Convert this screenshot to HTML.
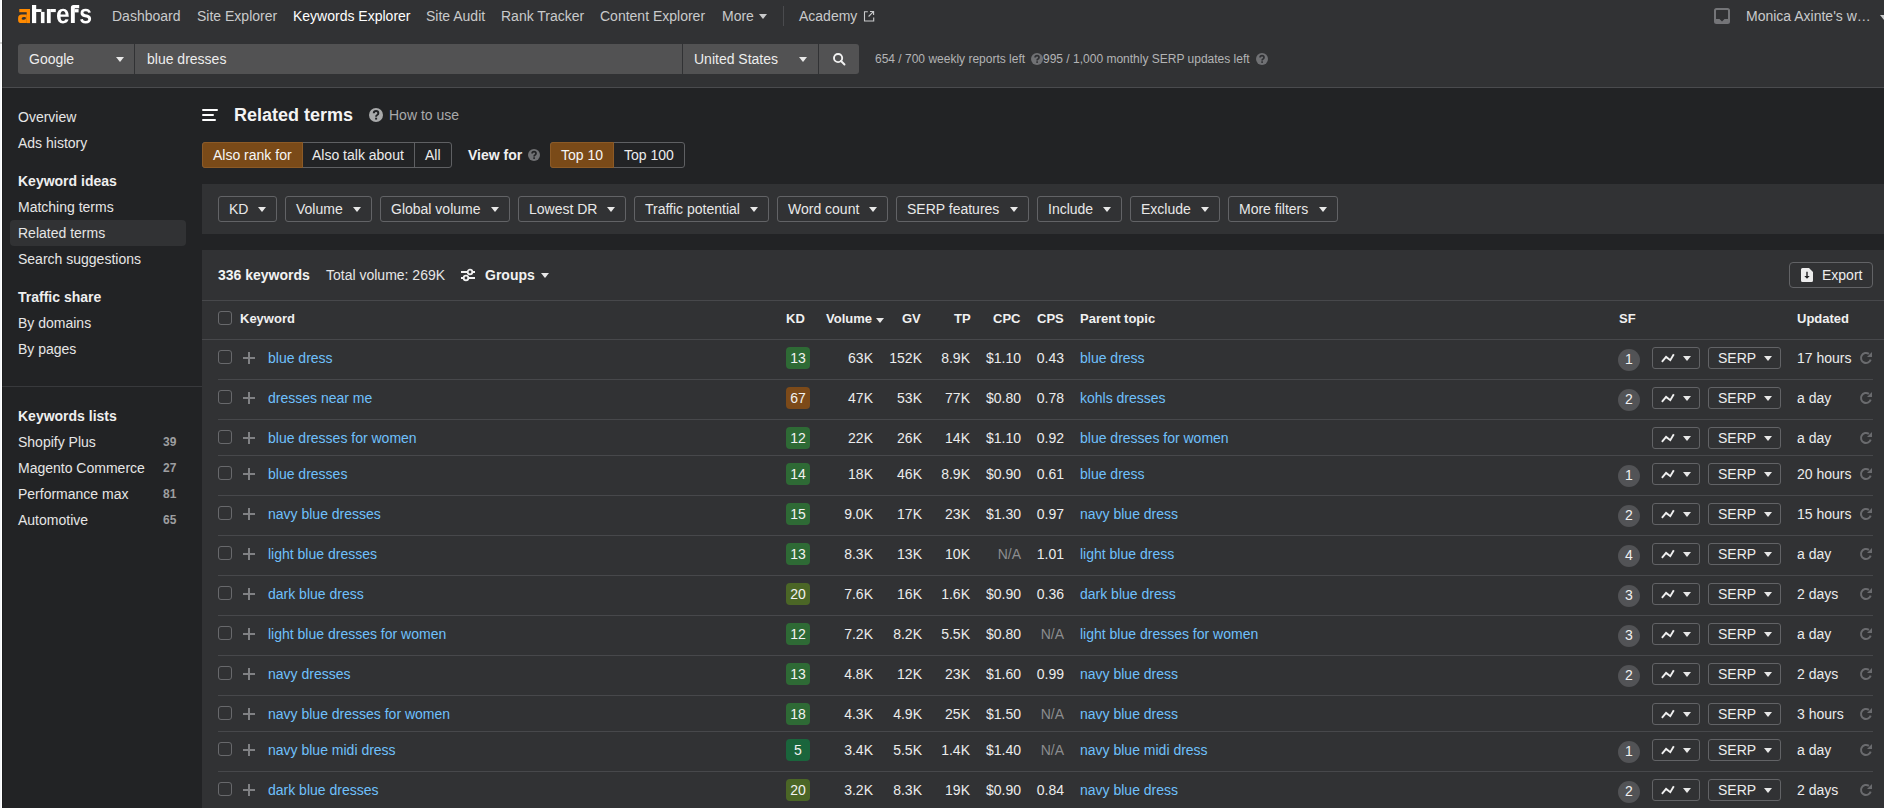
<!DOCTYPE html>
<html><head><meta charset="utf-8">
<style>
*{box-sizing:border-box;margin:0;padding:0}
html,body{width:1884px;height:808px;overflow:hidden}
body{position:relative;background:#222325;font-family:"Liberation Sans",sans-serif;font-size:14px;line-height:16px;color:#e9e9e9}
.a{position:absolute;white-space:nowrap}
.t{position:absolute;white-space:nowrap;line-height:16px}
#strip{left:0;top:0;width:2px;height:808px;background:#efefef}
#top{left:2px;top:0;width:1882px;height:88px;background:#313234;border-bottom:1px solid #4a4b4e}
.nav{color:#c9cacb;top:8px}
.tri{position:absolute;width:0;height:0;border-left:4px solid transparent;border-right:4px solid transparent;border-top:5px solid #e8e8e8}
.sel{position:absolute;top:44px;height:30px;background:#525253}
.side{left:18px;color:#e6e6e6}
.sideb{left:18px;font-weight:bold;color:#efefef}
.cnt{left:163px;color:#9d9ea0;font-size:12px;font-weight:bold}
.panel{position:absolute;background:#313234}
.fb{position:absolute;top:196px;height:26px;border:1px solid #626366;border-radius:3px;color:#e8e8e8}
.fb span{position:absolute;top:4px;left:10px}
.fb i{position:absolute;right:10px;top:10px;width:0;height:0;border-left:4px solid transparent;border-right:4px solid transparent;border-top:5px solid #e8e8e8}
.hd{font-weight:bold;font-size:13px;color:#f0f0f0}
.rl{position:absolute;left:218px;width:1655px;height:1px;background:#47484b}
.cb{position:absolute;left:218px;width:14px;height:14px;border:1px solid #68696c;border-radius:3px}
.pl{position:absolute;left:243px;width:12px;height:12px}
.pl:before{content:"";position:absolute;left:5px;top:0;width:2px;height:12px;background:#808184}
.pl:after{content:"";position:absolute;left:0;top:5px;width:12px;height:2px;background:#808184}
.lk{color:#6fc0fc}
.kd{position:absolute;left:786px;width:24px;height:22px;border-radius:4px;color:#f2f2f2;text-align:center;line-height:22px}
.g1{background:#2e6a35}
.g2{background:#4b6626}
.g0{background:#1a653c}
.o1{background:#7c4a19}
.num{color:#ececec;text-align:right}
.na{color:#8b8c8e}
.sf{position:absolute;left:1618px;width:22px;height:22px;border-radius:50%;background:#525356;color:#f0f0f0;text-align:center;line-height:20px}
.tb{position:absolute;left:1652px;width:48px;height:22px;border:1px solid #626366;border-radius:3px}
.sb{position:absolute;left:1708px;width:73px;height:22px;border:1px solid #626366;border-radius:3px}
.sb span{position:absolute;left:9px;top:2px;color:#ececec}
.tb i,.sb i{position:absolute;top:8px;width:0;height:0;border-left:4px solid transparent;border-right:4px solid transparent;border-top:5px solid #e8e8e8}
.tb i{left:30px}
.sb i{left:55px}
.tb svg{position:absolute;left:8px;top:5px}
.up{color:#ececec;left:1797px}
.rf{position:absolute;left:1859px}
</style></head><body>

<div id="top" class="a"></div>
<!-- logo -->
<svg class="a" style="left:0;top:0" width="100" height="30" viewBox="0 0 100 30"><g fill="#ff8a00"><rect x="19.3" y="9" width="10.7" height="3.2"/><rect x="26.7" y="9" width="3.3" height="14.1"/><path fill-rule="evenodd" d="M21.8 14.5H26.8V23.1H21.5Q18.1 23.1 18.1 19.9V18.2Q18.1 14.5 21.8 14.5ZM23.8 17.1Q25.9 16.9 26 18.1Q26 19.5 23.7 19.8Q21.6 20 21.6 18.8Q21.6 17.4 23.8 17.1Z"/></g><g fill="#fff"><rect x="32" y="5" width="4.2" height="18.1"/><rect x="36" y="9.1" width="5.5" height="2.9"/><rect x="40.9" y="11.9" width="3.6" height="11.2"/><rect x="46.9" y="9" width="3.8" height="14.1"/><rect x="50.5" y="9" width="5.3" height="3.1"/><path d="M63.04 23.4Q60.13 23.4 58.56 21.51Q57 19.61 57 15.98Q57 12.47 58.59 10.59Q60.17 8.7 63.08 8.7Q65.86 8.7 67.33 10.72Q68.8 12.75 68.8 16.65V16.76H60.52Q60.52 18.83 61.22 19.88Q61.92 20.94 63.2 20.94Q64.98 20.94 65.45 19.25L68.61 19.55Q67.24 23.4 63.04 23.4ZM63.04 11.02Q61.86 11.02 61.22 11.92Q60.58 12.83 60.54 14.45H65.55Q65.46 12.74 64.8 11.88Q64.15 11.02 63.04 11.02Z"/><path d="M73.5 5H79.2V8.2H74.8V22.9H70.9V7.6Q70.9 5 73.5 5Z"/><rect x="74.6" y="9.1" width="4" height="3.3"/><path d="M91.1 19Q91.1 21.06 89.66 22.23Q88.22 23.4 85.68 23.4Q83.19 23.4 81.86 22.48Q80.54 21.55 80.1 19.6L82.86 19.12Q83.1 20.13 83.68 20.55Q84.25 20.97 85.68 20.97Q87 20.97 87.61 20.57Q88.21 20.18 88.21 19.34Q88.21 18.66 87.73 18.26Q87.24 17.86 86.08 17.59Q83.41 16.97 82.48 16.44Q81.55 15.91 81.07 15.07Q80.58 14.22 80.58 12.99Q80.58 10.96 81.92 9.83Q83.26 8.7 85.71 8.7Q87.87 8.7 89.18 9.68Q90.5 10.66 90.82 12.52L88.03 12.86Q87.9 12 87.37 11.57Q86.85 11.15 85.71 11.15Q84.59 11.15 84.03 11.48Q83.47 11.82 83.47 12.6Q83.47 13.22 83.9 13.58Q84.33 13.94 85.35 14.17Q86.77 14.51 87.87 14.87Q88.97 15.23 89.64 15.73Q90.31 16.23 90.7 17.01Q91.1 17.78 91.1 19Z"/></g></svg>
<div class="t nav" style="left:112px">Dashboard</div>
<div class="t nav" style="left:197px">Site Explorer</div>
<div class="t nav" style="left:293px;color:#fff">Keywords Explorer</div>
<div class="t nav" style="left:426px">Site Audit</div>
<div class="t nav" style="left:501px">Rank Tracker</div>
<div class="t nav" style="left:600px">Content Explorer</div>
<div class="t nav" style="left:722px">More</div>
<div class="tri" style="left:759px;top:14px;border-top-color:#c9cacb"></div>
<div class="a" style="left:783px;top:6px;width:1px;height:20px;background:#4a4b4e"></div>
<div class="t nav" style="left:799px">Academy</div>
<svg class="a" style="left:863px;top:10px" width="12" height="12" viewBox="0 0 12 12"><path d="M4.8 1.8H1.5v9.2h9.2V7.4" fill="none" stroke="#c9cacb" stroke-width="1.1"/><path d="M7 1.5h3.6V5.1M10.4 1.7L5.6 6.5" fill="none" stroke="#c9cacb" stroke-width="1.1"/></svg>
<svg class="a" style="left:1714px;top:8px" width="16" height="16" viewBox="0 0 16 16"><path d="M2.5 1h11A1.5 1.5 0 0 1 15 2.5v11a1.5 1.5 0 0 1-1.5 1.5h-11A1.5 1.5 0 0 1 1 13.5v-11A1.5 1.5 0 0 1 2.5 1z" fill="none" stroke="#747578" stroke-width="2"/><path d="M1 11h4.5l2.5 2.5 2.5-2.5H15v3.5H1z" fill="#747578"/></svg>
<div class="t nav" style="left:1746px">Monica Axinte's w…</div>
<div class="tri" style="left:1880px;top:15px;border-top-color:#c9cacb"></div>

<!-- search row -->
<div class="sel" style="left:18px;width:116px;border-radius:3px 0 0 3px"></div>
<div class="t" style="left:29px;top:51px;color:#ededed">Google</div>
<div class="tri" style="left:116px;top:57px"></div>
<div class="sel" style="left:135px;width:547px"></div>
<div class="t" style="left:147px;top:51px;color:#ededed">blue dresses</div>
<div class="sel" style="left:683px;width:135px"></div>
<div class="t" style="left:694px;top:51px;color:#ededed">United States</div>
<div class="tri" style="left:799px;top:57px"></div>
<div class="sel" style="left:819px;width:40px;border-radius:0 3px 3px 0"></div>
<svg class="a" style="left:831px;top:51px" width="16" height="16" viewBox="0 0 16 16"><circle cx="7.1" cy="7.05" r="4.1" fill="none" stroke="#f2f2f2" stroke-width="1.9"/><path d="M10 10l3.5 3.5" stroke="#f2f2f2" stroke-width="1.9" stroke-linecap="round"/></svg>
<div class="t" style="left:875px;top:52px;font-size:12px;line-height:14px;color:#b3b4b5">654 / 700 weekly reports left</div>
<svg class="a" style="left:1031px;top:53px" width="12" height="12" viewBox="0 0 12 12"><circle cx="6" cy="6" r="6" fill="#707174"/><path d="M4.1 4.6Q4.1 2.6 6.05 2.6Q8 2.6 8 4.4Q8 5.4 7 6Q6.1 6.5 6.1 7.5" fill="none" stroke="#2f3033" stroke-width="1.7"/><rect x="5.25" y="8.3" width="1.7" height="1.6" fill="#2f3033"/></svg>
<div class="t" style="left:1043px;top:52px;font-size:12px;line-height:14px;color:#b3b4b5">995 / 1,000 monthly SERP updates left</div>
<svg class="a" style="left:1256px;top:53px" width="12" height="12" viewBox="0 0 12 12"><circle cx="6" cy="6" r="6" fill="#707174"/><path d="M4.1 4.6Q4.1 2.6 6.05 2.6Q8 2.6 8 4.4Q8 5.4 7 6Q6.1 6.5 6.1 7.5" fill="none" stroke="#2f3033" stroke-width="1.7"/><rect x="5.25" y="8.3" width="1.7" height="1.6" fill="#2f3033"/></svg>

<!-- sidebar -->
<div class="a" style="left:10px;top:220px;width:176px;height:26px;background:#313234;border-radius:4px"></div>
<div class="t side" style="top:109px">Overview</div>
<div class="t side" style="top:135px">Ads history</div>
<div class="t sideb" style="top:173px">Keyword ideas</div>
<div class="t side" style="top:199px">Matching terms</div>
<div class="t side" style="top:225px">Related terms</div>
<div class="t side" style="top:251px">Search suggestions</div>
<div class="t sideb" style="top:289px">Traffic share</div>
<div class="t side" style="top:315px">By domains</div>
<div class="t side" style="top:341px">By pages</div>
<div class="a" style="left:2px;top:386px;width:200px;height:1px;background:#38393c"></div>
<div class="t sideb" style="top:408px">Keywords lists</div>
<div class="t side" style="top:434px">Shopify Plus</div>
<div class="t cnt" style="top:434px">39</div>
<div class="t side" style="top:460px">Magento Commerce</div>
<div class="t cnt" style="top:460px">27</div>
<div class="t side" style="top:486px">Performance max</div>
<div class="t cnt" style="top:486px">81</div>
<div class="t side" style="top:512px">Automotive</div>
<div class="t cnt" style="top:512px">65</div>

<!-- main header -->
<svg class="a" style="left:201px;top:108px" width="18" height="14" viewBox="0 0 18 14"><path d="M2 2h14M2 7h10M2 12h12" stroke="#fff" stroke-width="2" stroke-linecap="round"/></svg>
<div class="t" style="left:234px;top:105px;font-weight:bold;font-size:18px;line-height:20px;color:#f4f4f4">Related terms</div>
<svg class="a" style="left:369px;top:108px" width="14" height="14" viewBox="0 0 12 12"><circle cx="6" cy="6" r="6" fill="#a9aaab"/><path d="M4.1 4.6Q4.1 2.6 6.05 2.6Q8 2.6 8 4.4Q8 5.4 7 6Q6.1 6.5 6.1 7.5" fill="none" stroke="#222325" stroke-width="1.7"/><rect x="5.25" y="8.3" width="1.7" height="1.6" fill="#222325"/></svg>
<div class="t" style="left:389px;top:107px;color:#a9aaab">How to use</div>

<!-- tabs -->
<div class="a" style="left:202px;top:142px;width:250px;height:26px;border:1px solid #5f6063;border-radius:3px"></div>
<div class="a" style="left:202px;top:142px;width:101px;height:26px;background:#7a4a18;border:1px solid #8c5a26;border-radius:3px 0 0 3px"></div>
<div class="t" style="left:213px;top:147px;color:#f6f6f6">Also rank for</div>
<div class="t" style="left:312px;top:147px;color:#ececec">Also talk about</div>
<div class="a" style="left:414px;top:142px;width:1px;height:26px;background:#5f6063"></div>
<div class="t" style="left:425px;top:147px;color:#ececec">All</div>
<div class="t" style="left:468px;top:147px;font-weight:bold;color:#f0f0f0">View for</div>
<svg class="a" style="left:528px;top:149px" width="12" height="12" viewBox="0 0 12 12"><circle cx="6" cy="6" r="6" fill="#707174"/><path d="M4.1 4.6Q4.1 2.6 6.05 2.6Q8 2.6 8 4.4Q8 5.4 7 6Q6.1 6.5 6.1 7.5" fill="none" stroke="#222325" stroke-width="1.7"/><rect x="5.25" y="8.3" width="1.7" height="1.6" fill="#222325"/></svg>
<div class="a" style="left:550px;top:142px;width:135px;height:26px;border:1px solid #5f6063;border-radius:3px"></div>
<div class="a" style="left:550px;top:142px;width:64px;height:26px;background:#7a4a18;border:1px solid #8c5a26;border-radius:3px 0 0 3px"></div>
<div class="t" style="left:561px;top:147px;color:#f6f6f6">Top 10</div>
<div class="t" style="left:624px;top:147px;color:#ececec">Top 100</div>

<!-- filter panel -->
<div class="panel" style="left:202px;top:184px;width:1682px;height:50px"></div>
<div class="fb" style="left:218px;width:59px"><span>KD</span><i></i></div>
<div class="fb" style="left:285px;width:87px"><span>Volume</span><i></i></div>
<div class="fb" style="left:380px;width:130px"><span>Global volume</span><i></i></div>
<div class="fb" style="left:518px;width:108px"><span>Lowest DR</span><i></i></div>
<div class="fb" style="left:634px;width:135px"><span>Traffic potential</span><i></i></div>
<div class="fb" style="left:777px;width:111px"><span>Word count</span><i></i></div>
<div class="fb" style="left:896px;width:133px"><span>SERP features</span><i></i></div>
<div class="fb" style="left:1037px;width:85px"><span>Include</span><i></i></div>
<div class="fb" style="left:1130px;width:90px"><span>Exclude</span><i></i></div>
<div class="fb" style="left:1228px;width:110px"><span>More filters</span><i></i></div>

<!-- table panel -->
<div class="panel" style="left:202px;top:250px;width:1682px;height:558px"></div>
<div class="t" style="left:218px;top:267px;font-weight:bold;color:#f2f2f2">336 keywords</div>
<div class="t" style="left:326px;top:267px;color:#e6e6e6">Total volume: 269K</div>
<svg class="a" style="left:460px;top:268px" width="16" height="14" viewBox="0 0 16 14"><path d="M1 4h14M1 10h14" stroke="#f2f2f2" stroke-width="2"/><circle cx="10" cy="4" r="2.3" fill="#313234" stroke="#f2f2f2" stroke-width="1.8"/><circle cx="6" cy="10" r="2.3" fill="#313234" stroke="#f2f2f2" stroke-width="1.8"/></svg>
<div class="t" style="left:485px;top:267px;font-weight:bold;color:#f2f2f2">Groups</div>
<div class="tri" style="left:541px;top:273px"></div>
<div class="a" style="left:1789px;top:262px;width:84px;height:26px;border:1px solid #626366;border-radius:4px"></div>
<svg class="a" style="left:1801px;top:268px" width="12" height="14" viewBox="0 0 12 14"><path d="M1.5 0H8l4 4v8.5A1.5 1.5 0 0 1 10.5 14h-9A1.5 1.5 0 0 1 0 12.5v-11A1.5 1.5 0 0 1 1.5 0z" fill="#ececec"/><path d="M5.3 3.8H6.7V8H8.7L6 10.7L3.3 8H5.3Z" fill="#1e1f21"/></svg>
<div class="t" style="left:1822px;top:267px;color:#ededed">Export</div>
<div class="a" style="left:202px;top:300px;width:1682px;height:1px;background:#47484b"></div>
<div class="a" style="left:202px;top:339px;width:1682px;height:1px;background:#47484b"></div>
<div class="cb" style="top:311px"></div>
<div class="t hd" style="left:240px;top:311px">Keyword</div>
<div class="t hd" style="left:786px;top:311px">KD</div>
<div class="t hd" style="left:826px;top:311px">Volume</div>
<div class="tri" style="left:876px;top:318px;border-left-width:4px;border-right-width:4px;border-top-width:5px"></div>
<div class="t hd" style="left:902px;top:311px">GV</div>
<div class="t hd" style="left:954px;top:311px">TP</div>
<div class="t hd" style="left:993px;top:311px">CPC</div>
<div class="t hd" style="left:1037px;top:311px">CPS</div>
<div class="t hd" style="left:1080px;top:311px">Parent topic</div>
<div class="t hd" style="left:1619px;top:311px">SF</div>
<div class="t hd" style="left:1797px;top:311px">Updated</div>
<div class="cb" style="top:350px"></div>
<div class="pl" style="top:352px"></div>
<div class="t lk" style="left:268px;top:350px">blue dress</div>
<div class="kd g1" style="top:347px">13</div>
<div class="t num" style="left:773px;width:100px;text-align:right;top:350px">63K</div>
<div class="t num" style="left:822px;width:100px;text-align:right;top:350px">152K</div>
<div class="t num" style="left:870px;width:100px;text-align:right;top:350px">8.9K</div>
<div class="t num" style="left:921px;width:100px;text-align:right;top:350px">$1.10</div>
<div class="t num" style="left:964px;width:100px;text-align:right;top:350px">0.43</div>
<div class="t lk" style="left:1080px;top:350px">blue dress</div>
<div class="sf" style="top:349px">1</div>
<div class="tb" style="top:347px"><svg width="16" height="12" viewBox="0 0 16 12"><path d="M0.9 8.9L5.1 3.9L9.3 7.2L12.8 1.3" fill="none" stroke="#f0f0f0" stroke-width="1.9"/></svg><i></i></div>
<div class="sb" style="top:347px"><span>SERP</span><i></i></div>
<div class="t up" style="top:350px">17 hours</div>
<div class="rf" style="top:351px"><svg width="14" height="14" viewBox="0 0 14 14"><path d="M9.9 2.9A5 5 0 1 0 11.7 8.7" fill="none" stroke="#6a6b6e" stroke-width="2"/><path d="M13 1V6H8z" fill="#6a6b6e"/></svg></div>
<div class="rl" style="top:379px"></div>
<div class="cb" style="top:390px"></div>
<div class="pl" style="top:392px"></div>
<div class="t lk" style="left:268px;top:390px">dresses near me</div>
<div class="kd o1" style="top:387px">67</div>
<div class="t num" style="left:773px;width:100px;text-align:right;top:390px">47K</div>
<div class="t num" style="left:822px;width:100px;text-align:right;top:390px">53K</div>
<div class="t num" style="left:870px;width:100px;text-align:right;top:390px">77K</div>
<div class="t num" style="left:921px;width:100px;text-align:right;top:390px">$0.80</div>
<div class="t num" style="left:964px;width:100px;text-align:right;top:390px">0.78</div>
<div class="t lk" style="left:1080px;top:390px">kohls dresses</div>
<div class="sf" style="top:389px">2</div>
<div class="tb" style="top:387px"><svg width="16" height="12" viewBox="0 0 16 12"><path d="M0.9 8.9L5.1 3.9L9.3 7.2L12.8 1.3" fill="none" stroke="#f0f0f0" stroke-width="1.9"/></svg><i></i></div>
<div class="sb" style="top:387px"><span>SERP</span><i></i></div>
<div class="t up" style="top:390px">a day</div>
<div class="rf" style="top:391px"><svg width="14" height="14" viewBox="0 0 14 14"><path d="M9.9 2.9A5 5 0 1 0 11.7 8.7" fill="none" stroke="#6a6b6e" stroke-width="2"/><path d="M13 1V6H8z" fill="#6a6b6e"/></svg></div>
<div class="rl" style="top:419px"></div>
<div class="cb" style="top:430px"></div>
<div class="pl" style="top:432px"></div>
<div class="t lk" style="left:268px;top:430px">blue dresses for women</div>
<div class="kd g1" style="top:427px">12</div>
<div class="t num" style="left:773px;width:100px;text-align:right;top:430px">22K</div>
<div class="t num" style="left:822px;width:100px;text-align:right;top:430px">26K</div>
<div class="t num" style="left:870px;width:100px;text-align:right;top:430px">14K</div>
<div class="t num" style="left:921px;width:100px;text-align:right;top:430px">$1.10</div>
<div class="t num" style="left:964px;width:100px;text-align:right;top:430px">0.92</div>
<div class="t lk" style="left:1080px;top:430px">blue dresses for women</div>
<div class="tb" style="top:427px"><svg width="16" height="12" viewBox="0 0 16 12"><path d="M0.9 8.9L5.1 3.9L9.3 7.2L12.8 1.3" fill="none" stroke="#f0f0f0" stroke-width="1.9"/></svg><i></i></div>
<div class="sb" style="top:427px"><span>SERP</span><i></i></div>
<div class="t up" style="top:430px">a day</div>
<div class="rf" style="top:431px"><svg width="14" height="14" viewBox="0 0 14 14"><path d="M9.9 2.9A5 5 0 1 0 11.7 8.7" fill="none" stroke="#6a6b6e" stroke-width="2"/><path d="M13 1V6H8z" fill="#6a6b6e"/></svg></div>
<div class="rl" style="top:455px"></div>
<div class="cb" style="top:466px"></div>
<div class="pl" style="top:468px"></div>
<div class="t lk" style="left:268px;top:466px">blue dresses</div>
<div class="kd g1" style="top:463px">14</div>
<div class="t num" style="left:773px;width:100px;text-align:right;top:466px">18K</div>
<div class="t num" style="left:822px;width:100px;text-align:right;top:466px">46K</div>
<div class="t num" style="left:870px;width:100px;text-align:right;top:466px">8.9K</div>
<div class="t num" style="left:921px;width:100px;text-align:right;top:466px">$0.90</div>
<div class="t num" style="left:964px;width:100px;text-align:right;top:466px">0.61</div>
<div class="t lk" style="left:1080px;top:466px">blue dress</div>
<div class="sf" style="top:465px">1</div>
<div class="tb" style="top:463px"><svg width="16" height="12" viewBox="0 0 16 12"><path d="M0.9 8.9L5.1 3.9L9.3 7.2L12.8 1.3" fill="none" stroke="#f0f0f0" stroke-width="1.9"/></svg><i></i></div>
<div class="sb" style="top:463px"><span>SERP</span><i></i></div>
<div class="t up" style="top:466px">20 hours</div>
<div class="rf" style="top:467px"><svg width="14" height="14" viewBox="0 0 14 14"><path d="M9.9 2.9A5 5 0 1 0 11.7 8.7" fill="none" stroke="#6a6b6e" stroke-width="2"/><path d="M13 1V6H8z" fill="#6a6b6e"/></svg></div>
<div class="rl" style="top:495px"></div>
<div class="cb" style="top:506px"></div>
<div class="pl" style="top:508px"></div>
<div class="t lk" style="left:268px;top:506px">navy blue dresses</div>
<div class="kd g1" style="top:503px">15</div>
<div class="t num" style="left:773px;width:100px;text-align:right;top:506px">9.0K</div>
<div class="t num" style="left:822px;width:100px;text-align:right;top:506px">17K</div>
<div class="t num" style="left:870px;width:100px;text-align:right;top:506px">23K</div>
<div class="t num" style="left:921px;width:100px;text-align:right;top:506px">$1.30</div>
<div class="t num" style="left:964px;width:100px;text-align:right;top:506px">0.97</div>
<div class="t lk" style="left:1080px;top:506px">navy blue dress</div>
<div class="sf" style="top:505px">2</div>
<div class="tb" style="top:503px"><svg width="16" height="12" viewBox="0 0 16 12"><path d="M0.9 8.9L5.1 3.9L9.3 7.2L12.8 1.3" fill="none" stroke="#f0f0f0" stroke-width="1.9"/></svg><i></i></div>
<div class="sb" style="top:503px"><span>SERP</span><i></i></div>
<div class="t up" style="top:506px">15 hours</div>
<div class="rf" style="top:507px"><svg width="14" height="14" viewBox="0 0 14 14"><path d="M9.9 2.9A5 5 0 1 0 11.7 8.7" fill="none" stroke="#6a6b6e" stroke-width="2"/><path d="M13 1V6H8z" fill="#6a6b6e"/></svg></div>
<div class="rl" style="top:535px"></div>
<div class="cb" style="top:546px"></div>
<div class="pl" style="top:548px"></div>
<div class="t lk" style="left:268px;top:546px">light blue dresses</div>
<div class="kd g1" style="top:543px">13</div>
<div class="t num" style="left:773px;width:100px;text-align:right;top:546px">8.3K</div>
<div class="t num" style="left:822px;width:100px;text-align:right;top:546px">13K</div>
<div class="t num" style="left:870px;width:100px;text-align:right;top:546px">10K</div>
<div class="t na" style="left:921px;width:100px;text-align:right;top:546px">N/A</div>
<div class="t num" style="left:964px;width:100px;text-align:right;top:546px">1.01</div>
<div class="t lk" style="left:1080px;top:546px">light blue dress</div>
<div class="sf" style="top:545px">4</div>
<div class="tb" style="top:543px"><svg width="16" height="12" viewBox="0 0 16 12"><path d="M0.9 8.9L5.1 3.9L9.3 7.2L12.8 1.3" fill="none" stroke="#f0f0f0" stroke-width="1.9"/></svg><i></i></div>
<div class="sb" style="top:543px"><span>SERP</span><i></i></div>
<div class="t up" style="top:546px">a day</div>
<div class="rf" style="top:547px"><svg width="14" height="14" viewBox="0 0 14 14"><path d="M9.9 2.9A5 5 0 1 0 11.7 8.7" fill="none" stroke="#6a6b6e" stroke-width="2"/><path d="M13 1V6H8z" fill="#6a6b6e"/></svg></div>
<div class="rl" style="top:575px"></div>
<div class="cb" style="top:586px"></div>
<div class="pl" style="top:588px"></div>
<div class="t lk" style="left:268px;top:586px">dark blue dress</div>
<div class="kd g2" style="top:583px">20</div>
<div class="t num" style="left:773px;width:100px;text-align:right;top:586px">7.6K</div>
<div class="t num" style="left:822px;width:100px;text-align:right;top:586px">16K</div>
<div class="t num" style="left:870px;width:100px;text-align:right;top:586px">1.6K</div>
<div class="t num" style="left:921px;width:100px;text-align:right;top:586px">$0.90</div>
<div class="t num" style="left:964px;width:100px;text-align:right;top:586px">0.36</div>
<div class="t lk" style="left:1080px;top:586px">dark blue dress</div>
<div class="sf" style="top:585px">3</div>
<div class="tb" style="top:583px"><svg width="16" height="12" viewBox="0 0 16 12"><path d="M0.9 8.9L5.1 3.9L9.3 7.2L12.8 1.3" fill="none" stroke="#f0f0f0" stroke-width="1.9"/></svg><i></i></div>
<div class="sb" style="top:583px"><span>SERP</span><i></i></div>
<div class="t up" style="top:586px">2 days</div>
<div class="rf" style="top:587px"><svg width="14" height="14" viewBox="0 0 14 14"><path d="M9.9 2.9A5 5 0 1 0 11.7 8.7" fill="none" stroke="#6a6b6e" stroke-width="2"/><path d="M13 1V6H8z" fill="#6a6b6e"/></svg></div>
<div class="rl" style="top:615px"></div>
<div class="cb" style="top:626px"></div>
<div class="pl" style="top:628px"></div>
<div class="t lk" style="left:268px;top:626px">light blue dresses for women</div>
<div class="kd g1" style="top:623px">12</div>
<div class="t num" style="left:773px;width:100px;text-align:right;top:626px">7.2K</div>
<div class="t num" style="left:822px;width:100px;text-align:right;top:626px">8.2K</div>
<div class="t num" style="left:870px;width:100px;text-align:right;top:626px">5.5K</div>
<div class="t num" style="left:921px;width:100px;text-align:right;top:626px">$0.80</div>
<div class="t na" style="left:964px;width:100px;text-align:right;top:626px">N/A</div>
<div class="t lk" style="left:1080px;top:626px">light blue dresses for women</div>
<div class="sf" style="top:625px">3</div>
<div class="tb" style="top:623px"><svg width="16" height="12" viewBox="0 0 16 12"><path d="M0.9 8.9L5.1 3.9L9.3 7.2L12.8 1.3" fill="none" stroke="#f0f0f0" stroke-width="1.9"/></svg><i></i></div>
<div class="sb" style="top:623px"><span>SERP</span><i></i></div>
<div class="t up" style="top:626px">a day</div>
<div class="rf" style="top:627px"><svg width="14" height="14" viewBox="0 0 14 14"><path d="M9.9 2.9A5 5 0 1 0 11.7 8.7" fill="none" stroke="#6a6b6e" stroke-width="2"/><path d="M13 1V6H8z" fill="#6a6b6e"/></svg></div>
<div class="rl" style="top:655px"></div>
<div class="cb" style="top:666px"></div>
<div class="pl" style="top:668px"></div>
<div class="t lk" style="left:268px;top:666px">navy dresses</div>
<div class="kd g1" style="top:663px">13</div>
<div class="t num" style="left:773px;width:100px;text-align:right;top:666px">4.8K</div>
<div class="t num" style="left:822px;width:100px;text-align:right;top:666px">12K</div>
<div class="t num" style="left:870px;width:100px;text-align:right;top:666px">23K</div>
<div class="t num" style="left:921px;width:100px;text-align:right;top:666px">$1.60</div>
<div class="t num" style="left:964px;width:100px;text-align:right;top:666px">0.99</div>
<div class="t lk" style="left:1080px;top:666px">navy blue dress</div>
<div class="sf" style="top:665px">2</div>
<div class="tb" style="top:663px"><svg width="16" height="12" viewBox="0 0 16 12"><path d="M0.9 8.9L5.1 3.9L9.3 7.2L12.8 1.3" fill="none" stroke="#f0f0f0" stroke-width="1.9"/></svg><i></i></div>
<div class="sb" style="top:663px"><span>SERP</span><i></i></div>
<div class="t up" style="top:666px">2 days</div>
<div class="rf" style="top:667px"><svg width="14" height="14" viewBox="0 0 14 14"><path d="M9.9 2.9A5 5 0 1 0 11.7 8.7" fill="none" stroke="#6a6b6e" stroke-width="2"/><path d="M13 1V6H8z" fill="#6a6b6e"/></svg></div>
<div class="rl" style="top:695px"></div>
<div class="cb" style="top:706px"></div>
<div class="pl" style="top:708px"></div>
<div class="t lk" style="left:268px;top:706px">navy blue dresses for women</div>
<div class="kd g1" style="top:703px">18</div>
<div class="t num" style="left:773px;width:100px;text-align:right;top:706px">4.3K</div>
<div class="t num" style="left:822px;width:100px;text-align:right;top:706px">4.9K</div>
<div class="t num" style="left:870px;width:100px;text-align:right;top:706px">25K</div>
<div class="t num" style="left:921px;width:100px;text-align:right;top:706px">$1.50</div>
<div class="t na" style="left:964px;width:100px;text-align:right;top:706px">N/A</div>
<div class="t lk" style="left:1080px;top:706px">navy blue dress</div>
<div class="tb" style="top:703px"><svg width="16" height="12" viewBox="0 0 16 12"><path d="M0.9 8.9L5.1 3.9L9.3 7.2L12.8 1.3" fill="none" stroke="#f0f0f0" stroke-width="1.9"/></svg><i></i></div>
<div class="sb" style="top:703px"><span>SERP</span><i></i></div>
<div class="t up" style="top:706px">3 hours</div>
<div class="rf" style="top:707px"><svg width="14" height="14" viewBox="0 0 14 14"><path d="M9.9 2.9A5 5 0 1 0 11.7 8.7" fill="none" stroke="#6a6b6e" stroke-width="2"/><path d="M13 1V6H8z" fill="#6a6b6e"/></svg></div>
<div class="rl" style="top:731px"></div>
<div class="cb" style="top:742px"></div>
<div class="pl" style="top:744px"></div>
<div class="t lk" style="left:268px;top:742px">navy blue midi dress</div>
<div class="kd g0" style="top:739px">5</div>
<div class="t num" style="left:773px;width:100px;text-align:right;top:742px">3.4K</div>
<div class="t num" style="left:822px;width:100px;text-align:right;top:742px">5.5K</div>
<div class="t num" style="left:870px;width:100px;text-align:right;top:742px">1.4K</div>
<div class="t num" style="left:921px;width:100px;text-align:right;top:742px">$1.40</div>
<div class="t na" style="left:964px;width:100px;text-align:right;top:742px">N/A</div>
<div class="t lk" style="left:1080px;top:742px">navy blue midi dress</div>
<div class="sf" style="top:741px">1</div>
<div class="tb" style="top:739px"><svg width="16" height="12" viewBox="0 0 16 12"><path d="M0.9 8.9L5.1 3.9L9.3 7.2L12.8 1.3" fill="none" stroke="#f0f0f0" stroke-width="1.9"/></svg><i></i></div>
<div class="sb" style="top:739px"><span>SERP</span><i></i></div>
<div class="t up" style="top:742px">a day</div>
<div class="rf" style="top:743px"><svg width="14" height="14" viewBox="0 0 14 14"><path d="M9.9 2.9A5 5 0 1 0 11.7 8.7" fill="none" stroke="#6a6b6e" stroke-width="2"/><path d="M13 1V6H8z" fill="#6a6b6e"/></svg></div>
<div class="rl" style="top:771px"></div>
<div class="cb" style="top:782px"></div>
<div class="pl" style="top:784px"></div>
<div class="t lk" style="left:268px;top:782px">dark blue dresses</div>
<div class="kd g2" style="top:779px">20</div>
<div class="t num" style="left:773px;width:100px;text-align:right;top:782px">3.2K</div>
<div class="t num" style="left:822px;width:100px;text-align:right;top:782px">8.3K</div>
<div class="t num" style="left:870px;width:100px;text-align:right;top:782px">19K</div>
<div class="t num" style="left:921px;width:100px;text-align:right;top:782px">$0.90</div>
<div class="t num" style="left:964px;width:100px;text-align:right;top:782px">0.84</div>
<div class="t lk" style="left:1080px;top:782px">navy blue dress</div>
<div class="sf" style="top:781px">2</div>
<div class="tb" style="top:779px"><svg width="16" height="12" viewBox="0 0 16 12"><path d="M0.9 8.9L5.1 3.9L9.3 7.2L12.8 1.3" fill="none" stroke="#f0f0f0" stroke-width="1.9"/></svg><i></i></div>
<div class="sb" style="top:779px"><span>SERP</span><i></i></div>
<div class="t up" style="top:782px">2 days</div>
<div class="rf" style="top:783px"><svg width="14" height="14" viewBox="0 0 14 14"><path d="M9.9 2.9A5 5 0 1 0 11.7 8.7" fill="none" stroke="#6a6b6e" stroke-width="2"/><path d="M13 1V6H8z" fill="#6a6b6e"/></svg></div>
<div class="rl" style="top:811px"></div>
<div class="a" style="left:0;top:0;width:1px;height:808px;background:#f5f7fa"></div><div class="a" style="left:1px;top:0;width:1px;height:808px;background:#fff"></div><div class="a" style="left:0;top:42px;width:2px;height:2px;background:#d2d2d2"></div><div class="a" style="left:2px;top:0;width:1px;height:808px;background:rgba(0,0,0,0.18)"></div>
</body></html>
